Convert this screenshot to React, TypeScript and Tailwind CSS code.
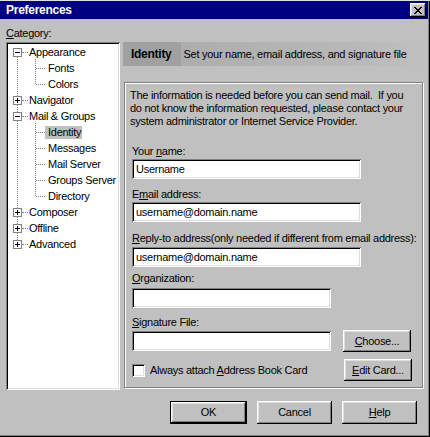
import React from 'react';

// classic 3D bevels
const raised =
  'shadow-[inset_-1px_-1px_#000,inset_1px_1px_#fff,inset_-2px_-2px_#808080,inset_2px_2px_#dfdfdf]';
const sunken =
  'shadow-[inset_1px_1px_#808080,inset_-1px_-1px_#fff,inset_2px_2px_#000,inset_-2px_-2px_#dfdfdf]';

type TreeNode = {
  label: string;
  level: 0 | 1;
  toggle?: '+' | '-';
  selected?: boolean;
};

const tree: TreeNode[] = [
  { label: 'Appearance', level: 0, toggle: '-' },
  { label: 'Fonts', level: 1 },
  { label: 'Colors', level: 1 },
  { label: 'Navigator', level: 0, toggle: '+' },
  { label: 'Mail & Groups', level: 0, toggle: '-' },
  { label: 'Identity', level: 1, selected: true },
  { label: 'Messages', level: 1 },
  { label: 'Mail Server', level: 1 },
  { label: 'Groups Server', level: 1 },
  { label: 'Directory', level: 1 },
  { label: 'Composer', level: 0, toggle: '+' },
  { label: 'Offline', level: 0, toggle: '+' },
  { label: 'Advanced', level: 0, toggle: '+' },
];

const Toggle: React.FC<{ kind: '+' | '-' }> = ({ kind }) => (
  <svg width="9" height="9" viewBox="0 0 9 9" shapeRendering="crispEdges" className="relative z-10 shrink-0">
    <rect x="0.5" y="0.5" width="8" height="8" fill="#fff" stroke="#808080" />
    <path d="M2 4.5H7" stroke="#000" />
    {kind === '+' && <path d="M4.5 2V7" stroke="#000" />}
  </svg>
);

const Button: React.FC<{ children: React.ReactNode; className?: string; isDefault?: boolean }> = ({
  children,
  className = '',
  isDefault,
}) => (
  <div className={`${className} ${isDefault ? 'border border-black' : ''} bg-[#c0c0c0]`}>
    <div className={`${raised} w-full h-full flex items-center justify-center`}>{children}</div>
  </div>
);

const Field: React.FC<{ className?: string; value?: string }> = ({ className = '', value = '' }) => (
  <div className={`${sunken} ${className} h-[20px] bg-white flex items-center pl-[4px] leading-[13px]`}>
    {value}
  </div>
);

export default function App() {
  return (
    <div className="w-[430px] h-[437px] bg-[#c0c0c0] text-black text-[11px] leading-[13px] tracking-[-0.27px] font-['Liberation_Sans',Arial,sans-serif] shadow-[inset_0_1px_#dfdfdf,inset_-1px_-1px_#000,inset_-2px_-2px_#808080] pt-px flex flex-col overflow-hidden">
      {/* title bar */}
      <div className="h-[18px] w-[428px] bg-[#000080] flex items-center justify-between pl-[6px] pr-[2px]">
        <span className="text-white font-bold text-[12px]">Preferences</span>
        <div className={`${raised} bg-[#c0c0c0] w-[16px] h-[14px] flex items-center justify-center`}>
          <svg width="8" height="7" viewBox="0 0 8 7" shapeRendering="crispEdges">
            <path d="M0 0h2v1h1v1h2V1h1V0h2v1H7v1H6v1H5v1h1v1h1v1h1v1H6V6H5V5H3v1H2v1H0V6h1V5h1V4h1V3H2V2H1V1H0z" fill="#000" />
          </svg>
        </div>
      </div>

      <div className="pl-[6px] flex flex-col">
        <div className="mt-[8px]">
          <span className="underline">C</span>ategory:
        </div>

        <div className="mt-[2px] flex gap-[3px]">
          {/* category tree */}
          <div className={`${sunken} w-[114px] h-[348px] bg-white p-[2px]`}>
            <div className="relative">
              <div className="absolute left-[9px] top-[13px] h-[183px] border-l border-dotted border-[#808080]" />
              <div className="absolute left-[27px] top-[15px] h-[25px] border-l border-dotted border-[#808080]" />
              <div className="absolute left-[27px] top-[79px] h-[73px] border-l border-dotted border-[#808080]" />
              {tree.map((n) =>
                n.level === 0 ? (
                  <div key={n.label} className="h-[16px] flex items-center pl-[5px]">
                    <Toggle kind={n.toggle ?? '+'} />
                    <div className="w-[6px] border-t border-dotted border-[#808080]" />
                    <span className="px-[1px] whitespace-nowrap">{n.label}</span>
                  </div>
                ) : (
                  <div key={n.label} className="h-[16px] flex items-center pl-[28px]">
                    <div className="w-[9px] border-t border-dotted border-[#808080]" />
                    <span
                      className={`pl-[3px] pr-[1px] whitespace-nowrap leading-[13px] ${n.selected ? 'bg-[#c0c0c0]' : ''}`}
                    >
                      {n.label}
                    </span>
                  </div>
                ),
              )}
            </div>
          </div>

          {/* identity panel */}
          <div className="w-[300px] flex flex-col">
            <div className="h-[24px] flex">
              <div className="h-full bg-[#a0a0a0] flex items-center pl-[8px] pr-[9px] font-bold text-[12px]">
                Identity
              </div>
              <div className="h-full flex-1 flex items-center pl-[3px] bg-[linear-gradient(to_right,#adadad,#b8b8b8_70%,#c0c0c0)] whitespace-nowrap">
                Set your name, email address, and signature file
              </div>
            </div>

            <div className="mt-[16px] ml-px h-[306px] border border-[#808080] shadow-[inset_1px_1px_#fff,1px_1px_#fff] px-[5px] pt-[6px]">
              <p className="whitespace-nowrap">
                The information is needed before you can send mail.{'\u00a0'} If you
                <br />
                do not know the information requested, please contact your
                <br />
                system administrator or Internet Service Provider.
              </p>

              <div className="ml-[2px]">
                <div className="mt-[17px]">
                  Your <span className="underline">n</span>ame:
                </div>
                <Field className="mt-px w-[229px]" value="Username" />

                <div className="mt-[9px]">
                  E<span className="underline">m</span>ail address:
                </div>
                <Field className="mt-px w-[229px]" value="username@domain.name" />

                <div className="mt-[10px] whitespace-nowrap">
                  <span className="underline">R</span>eply-to address(only needed if different from email address):
                </div>
                <Field className="mt-[2px] w-[229px]" value="username@domain.name" />

                <div className="mt-[5px]">
                  <span className="underline">O</span>rganization:
                </div>
                <Field className="mt-[3px] w-[199px]" />

                <div className="mt-[8px]">
                  <span className="underline">S</span>ignature File:
                </div>
                <div className="mt-[1px] flex items-center">
                  <Field className="w-[199px]" />
                  <Button className="ml-[12px] w-[68px] h-[22px]">
                    <span>
                      <span className="underline">C</span>hoose...
                    </span>
                  </Button>
                </div>

                <div className="mt-[7px] flex items-center">
                  <div className={`${sunken} w-[13px] h-[13px] bg-white`} />
                  <span className="ml-[5px]">
                    Always attach <span className="underline">A</span>ddress Book Card
                  </span>
                  <Button className="ml-auto mr-[5px] w-[68px] h-[22px]">
                    <span>
                      <span className="underline">E</span>dit Card...
                    </span>
                  </Button>
                </div>
              </div>
            </div>
          </div>
        </div>
      </div>

      {/* dialog buttons */}
      <div className="mt-[11px] flex justify-end gap-[10px] pr-[13px]">
        <Button isDefault className="w-[77px] h-[23px]">
          OK
        </Button>
        <Button className="w-[75px] h-[23px]">Cancel</Button>
        <Button className="w-[75px] h-[23px]">
          <span>
            <span className="underline">H</span>elp
          </span>
        </Button>
      </div>
    </div>
  );
}
